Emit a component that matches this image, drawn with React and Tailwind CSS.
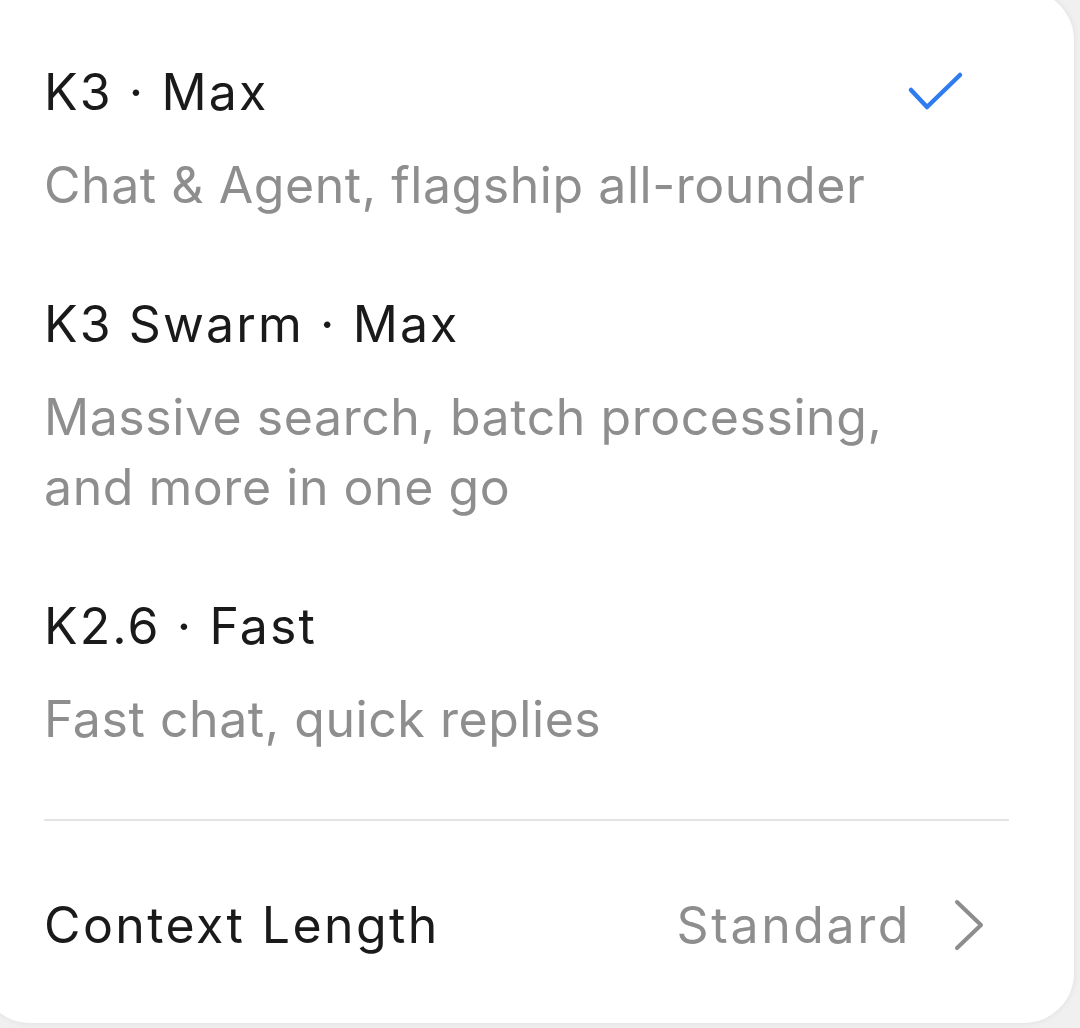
import React from "react";

const models = [
  { name: "K3 · Max", desc: "Chat & Agent, flagship all-rounder", selected: true },
  { name: "K3 Swarm · Max", desc: "Massive search, batch processing, and more in one go" },
  { name: "K2.6 · Fast", desc: "Fast chat, quick replies" },
];

const Check = () => (
  <svg width="60" height="46" viewBox="0 0 60 46" fill="none" className="mr-[42px]">
    <path d="M4 21 L20 38 L53 6" stroke="#2f7cf0" strokeWidth="4.5" strokeLinecap="round" strokeLinejoin="round" />
  </svg>
);

const Chevron = () => (
  <svg width="36" height="54" viewBox="0 0 36 54" fill="none" className="ml-[40px] mr-[22px]">
    <path d="M6 4 L30 27 L6 50" stroke="#8d8d8d" strokeWidth="4" strokeLinecap="round" strokeLinejoin="round" />
  </svg>
);

export default function App() {
  return (
    <div
      className="h-[1028px] w-[1080px] overflow-hidden bg-[#f0f0f0]"
      style={{ fontFamily: "Inter, 'Noto Sans', sans-serif" }}
    >
      {/* panel runs off the top and left of the shot */}
      <div className="-ml-[20px] -mt-[10px] h-[1033px] w-[1094px] rounded-[50px] bg-white pl-[64px] pr-[65px] pt-[67px] shadow-[0_0_6px_rgba(0,0,0,0.08)] flex flex-col">
        <div className="flex flex-col gap-[69px]">
          {models.map((m) => (
            <div key={m.name} className="flex flex-col">
              <div className="flex items-center justify-between h-[70px]">
                <span className="text-[50px] leading-[70px] text-[#1a1a1a] tracking-[2.1px]">{m.name}</span>
                {m.selected && <Check />}
              </div>
              <p className="mt-[23px] max-w-[880px] text-[50px] leading-[70px] text-[#8e8e8e] tracking-[0.55px]">
                {m.desc}
              </p>
            </div>
          ))}
        </div>

        <div className="mt-[65px] h-[2px] bg-[#e4e4e4]" />

        <div className="mt-[69px] flex h-[70px] items-center justify-between">
          <span className="text-[50px] leading-[70px] text-[#1a1a1a] tracking-[2.4px]">Context Length</span>
          <div className="flex items-center">
            <span className="text-[50px] leading-[70px] text-[#8e8e8e] tracking-[2.6px]">Standard</span>
            <Chevron />
          </div>
        </div>
      </div>
    </div>
  );
}
